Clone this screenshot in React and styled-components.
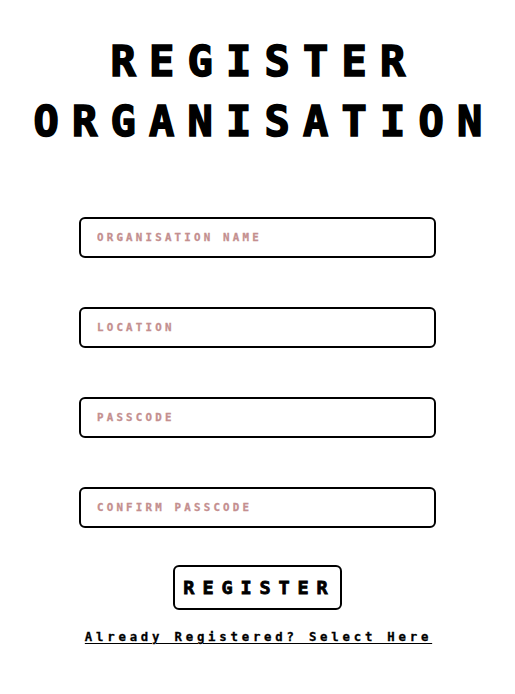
import React from "react";
import styled, { createGlobalStyle } from "styled-components";

const Global = createGlobalStyle`
  html, body { margin: 0; padding: 0; background: #ffffff; }
  body { font-family: "DejaVu Sans Mono", "Liberation Mono", monospace; }
  * { box-sizing: border-box; }
`;

const Page = styled.div`
  display: flex;
  flex-direction: column;
  align-items: center;
  padding-top: 32px;
  width: 515px;
`;

const Title = styled.h1`
  margin: 0;
  font-family: "DejaVu Sans Mono", monospace;
  font-weight: 700;
  font-size: 42px;
  line-height: 60px;
  letter-spacing: 13.2px;
  padding-left: 14px;
  text-align: center;
  color: #000;
  -webkit-text-stroke: 1.6px #000;
`;

const Form = styled.form`
  display: flex;
  flex-direction: column;
  align-items: center;
  gap: 49px;
  margin-top: 65px;
`;

const Field = styled.input`
  width: 357px;
  height: 41px;
  border: 2px solid #000;
  border-radius: 6px;
  padding: 0 0 0 16px;
  font-family: "DejaVu Sans Mono", monospace;
  font-weight: 700;
  font-size: 10.8px;
  letter-spacing: 3.2px;
  color: #000;
  background: #fff;
  outline: none;
  &::placeholder {
    color: #c48f8f;
    text-transform: uppercase;
    -webkit-text-stroke: 0.3px #c48f8f;
  }
`;

const Actions = styled.div`
  display: flex;
  flex-direction: column;
  align-items: center;
  margin-top: 37px;
`;

const Button = styled.button`
  width: 169px;
  height: 45px;
  border: 2px solid #000;
  border-radius: 6px;
  background: #fff;
  color: #000;
  font-family: "DejaVu Sans Mono", monospace;
  font-weight: 700;
  font-size: 18.5px;
  letter-spacing: 7.9px;
  padding: 0 0 0 4px;
  cursor: pointer;
  -webkit-text-stroke: 0.8px #000;
`;

const Link = styled.a`
  margin-top: 19px;
  font-family: "DejaVu Sans Mono", monospace;
  font-weight: 700;
  font-size: 12.3px;
  line-height: 16px;
  letter-spacing: 3.8px;
  padding-left: 2px;
  color: #000;
  text-decoration: underline;
  text-underline-offset: 2px;
  cursor: pointer;
  -webkit-text-stroke: 0.3px #000;
`;

export default function App() {
  return (
    <>
      <Global />
      <Page>
        <Title>
          REGISTER
          <br />
          ORGANISATION
        </Title>
        <Form onSubmit={(e) => e.preventDefault()}>
          <Field placeholder="Organisation Name" />
          <Field placeholder="Location" />
          <Field type="password" placeholder="Passcode" />
          <Field type="password" placeholder="Confirm Passcode" />
        </Form>
        <Actions>
          <Button type="button">REGISTER</Button>
          <Link>Already Registered? Select Here</Link>
        </Actions>
      </Page>
    </>
  );
}
